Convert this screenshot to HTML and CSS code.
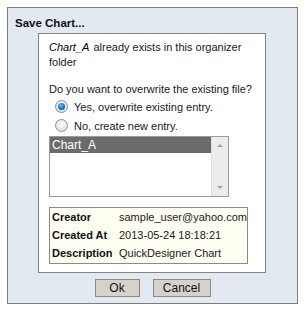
FILE: index.html
```html
<!DOCTYPE html>
<html>
<head>
<meta charset="utf-8">
<link rel="stylesheet" href="styles.css">
</head>
<body>
<div class="dialog">
  <div class="title">Save Chart...</div>
  <div class="content">
    <p class="msg"><i>Chart_A</i> already exists in this organizer folder</p>
    <p class="question">Do you want to overwrite the existing file?</p>
    <div class="option"><span class="radio checked"></span>Yes, overwrite existing entry.</div>
    <div class="option"><span class="radio"></span>No, create new entry.</div>
    <div class="listbox">
      <div class="items">
        <div class="item selected">Chart_A</div>
      </div>
      <div class="scrollbar">
        <span class="arrow up"></span>
        <span class="arrow down"></span>
      </div>
    </div>
    <table class="info">
      <tr><th>Creator</th><td>sample_user@yahoo.com</td></tr>
      <tr><th>Created At</th><td>2013-05-24 18:18:21</td></tr>
      <tr><th>Description</th><td>QuickDesigner Chart</td></tr>
    </table>
  </div>
  <div class="buttons">
    <button class="btn ok">Ok</button>
    <button class="btn cancel">Cancel</button>
  </div>
</div>
</body>
</html>
```
FILE: styles.css
```css
html, body {
  margin: 0;
  padding: 0;
  background: #ffffff;
}
body {
  padding: 7px;
  font-family: "Liberation Sans", Arial, sans-serif;
  font-size: 11px;
  color: #1a1a1a;
}
.dialog {
  width: 289px;
  height: 295px;
  border: 1px solid #7c7c7c;
  background: #e3e9f1;
  display: flex;
  flex-direction: column;
}
.title {
  font-weight: bold;
  font-size: 11.5px;
  color: #111;
  padding: 8px 0 0 7px;
  height: 17px;
  line-height: 14px;
}
.content {
  margin-left: 30px;
  width: 216px;
  height: 238px;
  border: 1px solid #858585;
  background: #ffffff;
  padding: 0 0 0 10px;
  flex: none;
}
.msg {
  margin: 6px 0 0 0;
  line-height: 15px;
  width: 200px;
}
.msg i {
  color: #000;
  padding-right: 1px;
}
.question {
  margin: 12px 0 0 0;
  line-height: 15px;
}
.option {
  display: flex;
  align-items: center;
  height: 19px;
  padding-left: 6px;
}
.radio {
  width: 11px;
  height: 11px;
  border-radius: 50%;
  border: 1px solid #8e8f8f;
  background: radial-gradient(circle at 50% 40%, #ffffff 0%, #e6e6e6 60%, #cfcfcf 100%);
  margin-right: 6px;
  position: relative;
  flex: none;
}
.radio.checked::after {
  content: "";
  position: absolute;
  left: 2px;
  top: 2px;
  width: 7px;
  height: 7px;
  border-radius: 50%;
  background: radial-gradient(circle at 40% 35%, #5fc2f2 0%, #1b7fc0 50%, #0b3c6a 100%);
}
.listbox {
  margin-top: 1px;
  width: 178px;
  height: 59px;
  border: 1px solid #9a9a9a;
  display: flex;
}
.items {
  flex: 1;
}
.item {
  height: 16px;
  line-height: 16px;
  padding-left: 2px;
  font-size: 12px;
}
.item.selected {
  background: #6b6b6b;
  color: #ffffff;
}
.scrollbar {
  width: 16px;
  background: #ececec;
  border-left: 1px solid #e0e0e0;
  position: relative;
}
.arrow {
  position: absolute;
  left: 5px;
  width: 0;
  height: 0;
  border-left: 3px solid transparent;
  border-right: 3px solid transparent;
}
.arrow.up {
  top: 7px;
  border-bottom: 3px solid #a0a0a0;
}
.arrow.down {
  bottom: 7px;
  border-top: 3px solid #a0a0a0;
}
.info {
  margin-top: 10px;
  width: 199px;
  border: 1px solid #8a8a8a;
  background: #fffff2;
  border-collapse: separate;
  border-spacing: 0;
  padding: 0 0 1px 0;
  table-layout: fixed;
}
.info th {
  text-align: left;
  font-weight: bold;
  color: #111;
  padding: 0 0 0 2px;
  width: 67px;
  height: 18px;
  white-space: nowrap;
  font-size: 11px;
}
.info td {
  padding: 0;
  white-space: nowrap;
  color: #1a1a1a;
}
.buttons {
  display: flex;
  justify-content: center;
  gap: 13px;
  margin-top: 6px;
}
.btn {
  font-family: "Liberation Sans", Arial, sans-serif;
  font-size: 12px;
  height: 18px;
  padding: 0;
  border: 1px solid #8a8a8a;
  background: #d6d2ca;
  color: #111;
  line-height: 16px;
}
.btn.ok {
  width: 45px;
}
.btn.cancel {
  width: 58px;
}
```
